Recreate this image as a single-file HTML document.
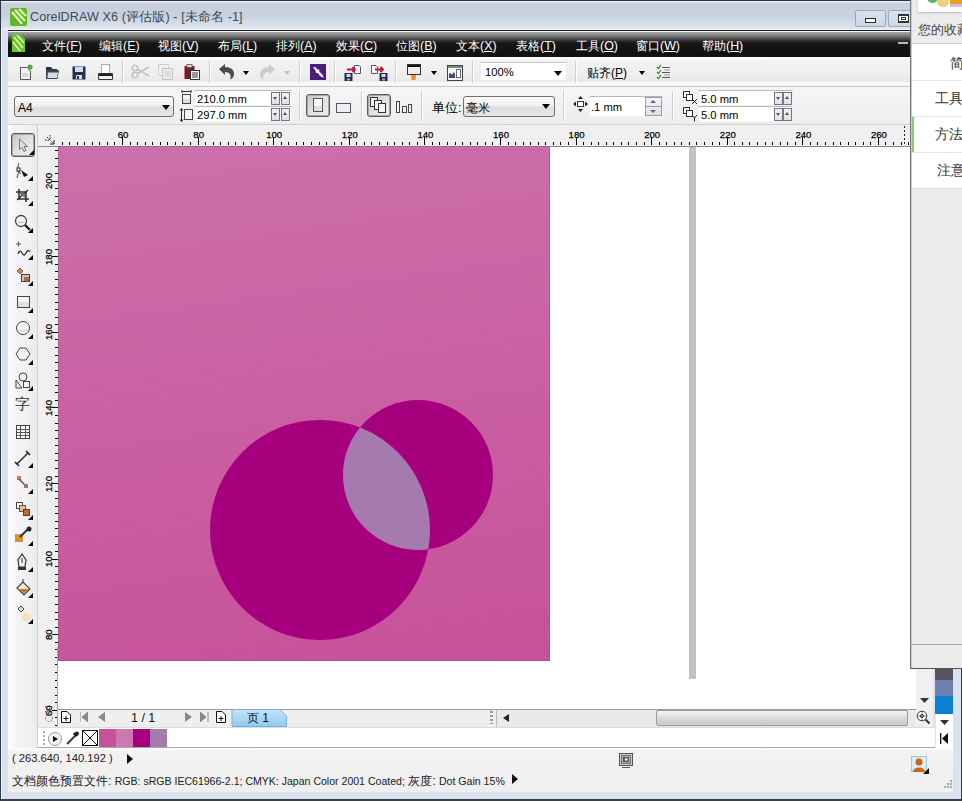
<!DOCTYPE html>
<html><head><meta charset="utf-8">
<style>
*{margin:0;padding:0;box-sizing:border-box}
html,body{width:962px;height:801px;overflow:hidden;background:#d9e3f0;font-family:"Liberation Sans",sans-serif;font-size:12px;color:#000}
.a{position:absolute}
#frame{left:0;top:0;width:962px;height:801px;background:#d9e3f0;border-left:1px solid #323a48;border-top:1px solid #2a3344;border-bottom:2px solid #3c4046;border-right:1px solid #323a48;box-shadow:inset 1px 0 0 #eef4fd}
#title{left:1px;top:1px;width:910px;height:29px;background:linear-gradient(#e8eef8 0,#e8eef8 1px,#c7d0dc 2px,#c8d2de 15px,#d3dde9 22px,#dde4ed 27px,#f4f6fa 29px)}
#tline{left:8px;top:30px;width:903px;height:1px;background:#1a1e28}
#tline2{left:8px;top:31px;width:903px;height:1px;background:#f4f4f4}
#ttext{left:30px;top:9px;font-size:12.6px;color:#3e4858;white-space:nowrap;letter-spacing:0.1px}
#menubar{left:8px;top:32px;width:903px;height:25px;background:linear-gradient(#a8a8a8 0,#7a7a7a 4px,#3a3a3a 8px,#161616 11px,#111 100%)}
.mi{position:absolute;top:6px;color:#fff;font-size:12.4px;white-space:nowrap}
#std{left:8px;top:57px;width:903px;height:30px;background:linear-gradient(#fdfdfd,#f2f2f2 15%,#eeeeee 60%,#e9e9e9 85%,#fafafa 88%,#f6f6f6);border-bottom:1px solid #c8c8c8}
#prop{left:8px;top:87px;width:903px;height:38px;background:linear-gradient(#f6f6f6,#ededed);border-bottom:1px solid #cfcfcf}
.sep{position:absolute;width:2px;border-left:1px solid #d0d0d0;border-right:1px solid #fff}
#tools{left:8px;top:125px;width:30px;height:623px;background:linear-gradient(90deg,#fefeff,#f5f3f7 8px,#f0f0f0 20px,#ececec);border-right:1px solid #cfcfcf}
#rulerT{left:38px;top:125px;width:872px;height:22px;background:#f0f0f0;border-bottom:1px solid #8a8a8a}
#rulerL{left:38px;top:147px;width:20px;height:580px;background:#f0f0f0}
#canvas{left:58px;top:147px;width:858px;height:563px;background:#fff;border-bottom:1px solid #9a9a9a}
#page{left:58px;top:146px;width:492px;height:515px;background:linear-gradient(172deg,#cb70aa,#c95da0 60%,#c7529a);box-shadow:inset 0 0 0 1px rgba(140,90,120,0.55)}
#shadowR{left:689px;top:147px;width:7px;height:532px;background:#c2c2c2}
#panel{left:910px;top:0;width:52px;height:669px;background:#ececec;border-left:2px solid #c8c8c8;border-bottom:1px solid #6e6e6e}
#nav{left:58px;top:710px;width:858px;height:17px;background:#efefef}
#pal{left:38px;top:727px;width:897px;height:21px;background:#fff;border-top:1px solid #dcdcdc;border-bottom:1px solid #a8a8a8}
#status{left:8px;top:748px;width:945px;height:44px;background:linear-gradient(#fbfbfb,#f2f2f2 4px,#efefef);box-shadow:inset 0 1px 0 #fff}
.rt{position:absolute;font-size:10px;color:#000;top:2px;white-space:nowrap;-webkit-text-stroke:0.25px #000}
.tick{position:absolute;background:#000}
.combo{position:absolute;border:1px solid #707070;border-radius:3px;background:linear-gradient(#fbfbfb,#f0f0f0 45%,#dedede 55%,#e6e6e6)}
.darr{position:absolute;width:0;height:0;border-left:4px solid transparent;border-right:4px solid transparent;border-top:5px solid #000}
.tbox{position:absolute;background:#fff;border:1px solid #f2f2f2;border-top-color:#b8b8b8;font-size:11.2px;padding-left:2px;line-height:14px;white-space:nowrap}
.spin{position:absolute;width:9px;height:13px;border:1px solid #75758a;background:linear-gradient(#f2f2f6,#e0e0e8)}
.btnp{position:absolute;border:1px solid #5c5c5c;border-radius:3px;background:linear-gradient(135deg,#c4c4c4,#e2e2e2 50%,#eeeeee);box-shadow:inset 0 0 0 1px #a8a8a8}
.ico{position:absolute}
</style></head><body>
<div id="frame" class="a"></div>
<div id="title" class="a"></div>
<svg class="a" style="left:10px;top:8px" width="17" height="18" viewBox="0 0 17 18">
 <rect x="0" y="0" width="17" height="18" rx="2" fill="#5fb81e"/>
 <path d="M2 4 L12 16 M5 2 L15 13 M9 1 L16 8" stroke="#e6f7c8" stroke-width="2.2" fill="none"/>
</svg>
<div id="ttext" class="a">CorelDRAW X6 (评估版) - [未命名 -1]</div>
<div class="a" style="left:855px;top:10px;width:31px;height:17px;border:1px solid #9aaabd;border-radius:2px;background:linear-gradient(#d8e2ee,#cdd9e7)"></div>
<div class="a" style="left:865px;top:18px;width:11px;height:5px;border:1px solid #2a2a2a;background:#fff"></div>
<div class="a" style="left:888px;top:10px;width:24px;height:17px;border:1px solid #9aaabd;border-radius:2px;background:linear-gradient(#d8e2ee,#cdd9e7)"></div>
<div class="a" style="left:898px;top:14px;width:11px;height:9px;border:1px solid #333;border-top-width:2px;border-bottom-width:2px;background:#fff"></div>
<div class="a" style="left:901px;top:17px;width:5px;height:3px;border:1px solid #333"></div>
<div id="tline" class="a"></div>
<div id="tline2" class="a"></div>
<div id="menubar" class="a">
 <svg class="a" style="left:4px;top:2px" width="13" height="18" viewBox="0 0 13 18"><path d="M0 0 L8 0 L13 5 L13 18 L0 18Z" fill="#6ec22a"/><path d="M2 3 L11 14 M1 8 L8 17 M5 1 L12 9" stroke="#d8f5b0" stroke-width="1.6"/></svg>
 <span class="mi" style="left:34px">文件(<u style="text-decoration-thickness:1px;text-underline-offset:1px">F</u>)</span>
 <span class="mi" style="left:91px">编辑(<u style="text-decoration-thickness:1px;text-underline-offset:1px">E</u>)</span>
 <span class="mi" style="left:150px">视图(<u style="text-decoration-thickness:1px;text-underline-offset:1px">V</u>)</span>
 <span class="mi" style="left:210px">布局(<u style="text-decoration-thickness:1px;text-underline-offset:1px">L</u>)</span>
 <span class="mi" style="left:268px">排列(<u style="text-decoration-thickness:1px;text-underline-offset:1px">A</u>)</span>
 <span class="mi" style="left:328px">效果(<u style="text-decoration-thickness:1px;text-underline-offset:1px">C</u>)</span>
 <span class="mi" style="left:388px">位图(<u style="text-decoration-thickness:1px;text-underline-offset:1px">B</u>)</span>
 <span class="mi" style="left:448px">文本(<u style="text-decoration-thickness:1px;text-underline-offset:1px">X</u>)</span>
 <span class="mi" style="left:508px">表格(<u style="text-decoration-thickness:1px;text-underline-offset:1px">T</u>)</span>
 <span class="mi" style="left:568px">工具(<u style="text-decoration-thickness:1px;text-underline-offset:1px">O</u>)</span>
 <span class="mi" style="left:628px">窗口(<u style="text-decoration-thickness:1px;text-underline-offset:1px">W</u>)</span>
 <span class="mi" style="left:694px">帮助(<u style="text-decoration-thickness:1px;text-underline-offset:1px">H</u>)</span>
 <div class="a" style="left:890px;top:10px;width:10px;height:2px;background:#bbb"></div>
</div>
<div id="std" class="a"></div>
<!--STD--><!-- new -->
<svg class="ico" style="left:19px;top:64px" width="15" height="16" viewBox="0 0 15 16"><path d="M1.5 3.5 H8 L11.5 7 V15.5 H1.5Z" fill="#f4f4f4" stroke="#555"/><path d="M3 12 H10 M3 10 H9" stroke="#bbb"/><circle cx="11" cy="3" r="2.6" fill="#4caf2a"/></svg>
<!-- open -->
<svg class="ico" style="left:45px;top:66px" width="15" height="14" viewBox="0 0 15 14"><path d="M1 1 H6 L7.5 3 H12 V5 H1Z" fill="#2a3140"/><path d="M1 4 H14 L12.5 13 H1Z" fill="#3c4658"/><path d="M3 6.5 H13 L12 12 H2.5Z" fill="#d6dbe6"/></svg>
<!-- save -->
<svg class="ico" style="left:72px;top:66px" width="14" height="14" viewBox="0 0 14 14"><rect x="0.5" y="0.5" width="13" height="13" fill="#28304f"/><rect x="3" y="1" width="8" height="5" fill="#d8dcea"/><rect x="4" y="9" width="6" height="4" fill="#d8dcea"/><rect x="5" y="10" width="2" height="3" fill="#28304f"/></svg>
<!-- print -->
<svg class="ico" style="left:98px;top:64px" width="15" height="16" viewBox="0 0 15 16"><rect x="3.5" y="0.5" width="8" height="9" fill="#fff" stroke="#aaa"/><path d="M0.5 9.5 H14.5 V15.5 H0.5Z" fill="#f0f0f0" stroke="#333"/><rect x="1" y="10" width="13" height="2" fill="#222"/></svg>
<div class="sep" style="left:122px;top:61px;height:22px"></div>
<!-- cut -->
<svg class="ico" style="left:131px;top:64px" width="19" height="15" viewBox="0 0 19 15"><circle cx="4" cy="4" r="2.8" fill="none" stroke="#c4c4c4" stroke-width="1.6"/><circle cx="4" cy="11" r="2.8" fill="none" stroke="#c4c4c4" stroke-width="1.6"/><path d="M6 5 L18 12 M6 10 L18 3" stroke="#c4c4c4" stroke-width="1.6"/></svg>
<!-- copy -->
<svg class="ico" style="left:158px;top:64px" width="16" height="16" viewBox="0 0 16 16"><rect x="0.5" y="0.5" width="10" height="11" fill="#f2f2f2" stroke="#cfcfcf"/><rect x="4.5" y="4.5" width="10" height="11" fill="#eaeaea" stroke="#c4c4c4"/><path d="M7 8 H12 M7 10 H12 M7 12 H12" stroke="#cfcfcf"/></svg>
<!-- paste -->
<svg class="ico" style="left:184px;top:64px" width="16" height="16" viewBox="0 0 16 16"><rect x="0.5" y="2" width="10" height="13" fill="#7a1a28"/><rect x="3" y="0.5" width="5" height="3" fill="#ddd" stroke="#555" stroke-width="0.8"/><rect x="6.5" y="6.5" width="9" height="9" fill="#fff" stroke="#333"/><path d="M8 9 H14 M8 11 H14 M8 13 H14" stroke="#333"/></svg>
<div class="sep" style="left:209px;top:61px;height:22px"></div>
<!-- undo -->
<svg class="ico" style="left:218px;top:63px" width="18" height="17" viewBox="0 0 18 17"><path d="M1 6 L7 1 V4 C13 4 16 7 16 11 C16 14 14 16 12 16.5 C13.5 14 13 9 7 9 V12Z" fill="#4a4a4a"/></svg>
<div class="darr" style="left:243px;top:71px;border-left-width:3px;border-right-width:3px;border-top-width:4px"></div>
<svg class="ico" style="left:258px;top:63px" width="18" height="17" viewBox="0 0 18 17"><path d="M17 6 L11 1 V4 C5 4 2 7 2 11 C2 14 4 16 6 16.5 C4.5 14 5 9 11 9 V12Z" fill="#cdcdcd"/></svg>
<div class="darr" style="left:284px;top:71px;border-left-width:3px;border-right-width:3px;border-top-width:4px;border-top-color:#c0c0c0"></div>
<div class="sep" style="left:299px;top:61px;height:22px"></div>
<!-- corel connect purple -->
<svg class="ico" style="left:310px;top:64px" width="16" height="16" viewBox="0 0 16 16"><rect width="16" height="16" fill="#4b1d78"/><path d="M3 3 L6 3.5 L7.5 6 L9 5 L9.5 8 L12 10 L14 14 L10 12 L8 9 L6 9 L5.5 6.5Z" fill="#fff"/></svg>
<div class="sep" style="left:334px;top:61px;height:22px"></div>
<!-- import -->
<svg class="ico" style="left:344px;top:64px" width="18" height="17" viewBox="0 0 18 17"><path d="M10.5 1.5 H15 L16.5 3 V9.5 H10.5Z" fill="#fff" stroke="#556"/><path d="M3 5.5 H11 M8.5 3 L11 5.5 L8.5 8" stroke="#c8102e" stroke-width="1.8" fill="none"/><rect x="0.5" y="9" width="8" height="8" fill="#1c2f4a"/><rect x="2.5" y="10" width="4" height="3" fill="#d8dde8"/><rect x="3" y="14.5" width="3" height="2" fill="#aab"/></svg>
<!-- export -->
<svg class="ico" style="left:370px;top:64px" width="18" height="17" viewBox="0 0 18 17"><path d="M1.5 1.5 H6 L7.5 3 V9.5 H1.5Z" fill="#fff" stroke="#556"/><path d="M5 5.5 H13 M10.5 3 L13 5.5 L10.5 8" stroke="#c8102e" stroke-width="1.8" fill="none"/><rect x="9.5" y="9" width="8" height="8" fill="#1c2f4a"/><rect x="11.5" y="10" width="4" height="3" fill="#d8dde8"/><rect x="12" y="14.5" width="3" height="2" fill="#aab"/></svg>
<div class="sep" style="left:395px;top:61px;height:22px"></div>
<!-- launcher -->
<svg class="ico" style="left:406px;top:64px" width="16" height="17" viewBox="0 0 16 17"><rect x="1.5" y="0.5" width="13" height="10" fill="#f0e8ec" stroke="#333"/><rect x="2" y="1" width="12" height="2" fill="#111"/><path d="M5 11 L10 11 L9.5 16 L5.5 16Z" fill="#f08a30"/></svg>
<div class="darr" style="left:431px;top:71px;border-left-width:3px;border-right-width:3px;border-top-width:4px"></div>
<!-- welcome -->
<svg class="ico" style="left:447px;top:65px" width="16" height="16" viewBox="0 0 16 16"><rect x="0.5" y="0.5" width="15" height="15" fill="#f4f4f4" stroke="#444"/><rect x="1" y="1" width="14" height="2" fill="#7a8a7a"/><path d="M2 13 V9 L4 8 L5 10 L7 7 L8 9 V13Z" fill="#3c4a7a"/><rect x="9.5" y="4.5" width="4" height="8" fill="#fff" stroke="#667"/></svg>
<div class="sep" style="left:472px;top:61px;height:22px"></div>
<!-- zoom combo -->
<div class="a" style="left:480px;top:62px;width:87px;height:19px;background:#fff;border:1px solid #ececec;border-top-color:#c8c8c8"></div>
<div class="a" style="left:485px;top:66px;font-size:11.2px">100%</div>
<div class="darr" style="left:554px;top:71px"></div>
<div class="sep" style="left:575px;top:61px;height:22px"></div>
<div class="a" style="left:587px;top:65px;font-size:12px">贴齐(<u style="text-decoration-thickness:1px;text-underline-offset:1px">P</u>)</div>
<div class="darr" style="left:639px;top:71px;border-left-width:3px;border-right-width:3px;border-top-width:4px"></div>
<svg class="ico" style="left:656px;top:64px" width="15" height="16" viewBox="0 0 15 16"><path d="M6 3.5 H14 M6 8.5 H14 M6 13.5 H14" stroke="#5a5a5a" stroke-width="1"/><path d="M8 6 H14 M8 11 H14" stroke="#9aa090" stroke-width="1"/><path d="M1 3 L2.5 4.5 L5 1 M1 8 L2.5 9.5 L5 6 M1 13 L2.5 14.5 L5 11" stroke="#4a7a40" stroke-width="1.2" fill="none"/></svg>
<!--/STD-->
<div id="prop" class="a"></div>
<!--PROP--><div class="combo" style="left:14px;top:96px;width:160px;height:21px"></div>
<div class="a" style="left:18px;top:101px;font-size:12px">A4</div>
<div class="darr" style="left:162px;top:105px"></div>
<!-- width/height icons -->
<svg class="ico" style="left:181px;top:90px" width="12" height="14" viewBox="0 0 12 14"><path d="M1 1.5 H10 M1 0 V3 M10 0 V3" stroke="#333"/><rect x="1.5" y="4.5" width="8" height="9" fill="#f4f4f4" stroke="#444"/><rect x="2" y="9" width="7" height="4" fill="#dcdce8"/></svg>
<svg class="ico" style="left:179px;top:108px" width="15" height="14" viewBox="0 0 15 14"><path d="M2.5 1 V13 M1 2.5 L2.5 0.5 L4 2.5 M1 11.5 L2.5 13.5 L4 11.5" stroke="#222" fill="none"/><rect x="5.5" y="1.5" width="8" height="10" fill="#f4f4f4" stroke="#444"/></svg>
<div class="tbox" style="left:194px;top:90px;width:98px;height:16px;padding-top:1px">210.0 mm</div>
<div class="tbox" style="left:194px;top:106px;width:98px;height:16px;padding-top:1px">297.0 mm</div>
<div class="spin" style="left:271px;top:92px"></div><div class="spin" style="left:281px;top:92px"></div>
<div class="spin" style="left:271px;top:108px"></div><div class="spin" style="left:281px;top:108px"></div>
<div class="darr" style="left:273px;top:97px;border-left-width:2.5px;border-right-width:2.5px;border-top-width:3px;border-top-color:#555"></div>
<div class="darr" style="left:283px;top:96px;border-left-width:2.5px;border-right-width:2.5px;border-top-width:0;border-bottom:3px solid #555"></div>
<div class="darr" style="left:273px;top:113px;border-left-width:2.5px;border-right-width:2.5px;border-top-width:3px;border-top-color:#555"></div>
<div class="darr" style="left:283px;top:112px;border-left-width:2.5px;border-right-width:2.5px;border-top-width:0;border-bottom:3px solid #555"></div>
<div class="sep" style="left:299px;top:91px;height:30px"></div>
<div class="btnp" style="left:306px;top:94px;width:24px;height:23px"></div>
<svg class="ico" style="left:312px;top:98px" width="12" height="15" viewBox="0 0 12 15"><rect x="1.5" y="0.5" width="9" height="13" fill="#fafafa" stroke="#555"/><rect x="2" y="8" width="8" height="5" fill="#dcdce8"/></svg>
<svg class="ico" style="left:336px;top:103px" width="16" height="11" viewBox="0 0 16 11"><rect x="0.5" y="0.5" width="14" height="9" fill="#eeeef6" stroke="#555"/></svg>
<div class="sep" style="left:361px;top:91px;height:30px"></div>
<div class="btnp" style="left:367px;top:94px;width:24px;height:23px"></div>
<svg class="ico" style="left:370px;top:97px" width="18" height="17" viewBox="0 0 18 17"><rect x="0.5" y="0.5" width="7" height="9" fill="#f4f4f4" stroke="#333"/><rect x="4.5" y="3.5" width="7" height="9" fill="#f4f4f4" stroke="#333"/><rect x="8.5" y="6.5" width="7" height="9" fill="#f4f4f4" stroke="#333"/></svg>
<svg class="ico" style="left:396px;top:101px" width="18" height="13" viewBox="0 0 18 13"><rect x="0.5" y="0.5" width="3" height="11" fill="#f4f4f4" stroke="#444"/><rect x="6.5" y="5.5" width="4" height="6" fill="#f4f4f4" stroke="#444"/><rect x="12.5" y="3.5" width="3" height="8" fill="#f4f4f4" stroke="#444"/></svg>
<div class="sep" style="left:421px;top:91px;height:30px"></div>
<div class="a" style="left:432px;top:100px;font-size:12.5px">单位:</div>
<div class="combo" style="left:463px;top:96px;width:92px;height:21px"></div>
<div class="a" style="left:466px;top:100px;font-size:12px">毫米</div>
<div class="darr" style="left:542px;top:104px"></div>
<div class="sep" style="left:563px;top:91px;height:30px"></div>
<svg class="ico" style="left:573px;top:96px" width="15" height="16" viewBox="0 0 15 16"><path d="M7.5 0 L10 3 H5Z M7.5 16 L10 13 H5Z M0 8 L3 5.5 V10.5Z M15 8 L12 5.5 V10.5Z" fill="#222"/><rect x="4.5" y="5.5" width="6" height="5" fill="#fff" stroke="#333"/></svg>
<div class="tbox" style="left:589px;top:96px;width:74px;height:21px;padding-top:3px;padding-left:1px">.1 mm</div>
<div class="a" style="left:645px;top:97px;width:17px;height:19px;border:1px solid #9a9aae;background:linear-gradient(#f4f4f8,#dedee6)"></div>
<div class="a" style="left:646px;top:106px;width:15px;height:1px;background:#9a9aae"></div>
<div class="darr" style="left:650px;top:100px;border-left-width:3px;border-right-width:3px;border-top-width:0;border-bottom:3px solid #667"></div>
<div class="darr" style="left:650px;top:110px;border-left-width:3px;border-right-width:3px;border-top-width:3px;border-top-color:#667"></div>
<div class="sep" style="left:672px;top:91px;height:30px"></div>
<svg class="ico" style="left:683px;top:91px" width="15" height="14" viewBox="0 0 15 14"><rect x="0.5" y="0.5" width="6" height="6" fill="#fff" stroke="#333"/><rect x="3.5" y="3.5" width="6" height="6" fill="#fff" stroke="#333"/><path d="M9 8 L14 13 M14 8 L9 13" stroke="#222"/></svg>
<svg class="ico" style="left:683px;top:107px" width="15" height="15" viewBox="0 0 15 15"><rect x="0.5" y="0.5" width="6" height="6" fill="#fff" stroke="#333"/><rect x="3.5" y="3.5" width="6" height="6" fill="#fff" stroke="#333"/><path d="M9 8 L11.5 11 L14 8 M11.5 11 V14.5" stroke="#222" fill="none"/></svg>
<div class="tbox" style="left:698px;top:90px;width:95px;height:16px;padding-top:1px">5.0 mm</div>
<div class="tbox" style="left:698px;top:106px;width:95px;height:16px;padding-top:1px">5.0 mm</div>
<div class="spin" style="left:774px;top:92px"></div><div class="spin" style="left:783px;top:92px"></div>
<div class="spin" style="left:774px;top:108px"></div><div class="spin" style="left:783px;top:108px"></div>
<div class="darr" style="left:776px;top:97px;border-left-width:2.5px;border-right-width:2.5px;border-top-width:3px;border-top-color:#555"></div>
<div class="darr" style="left:785px;top:96px;border-left-width:2.5px;border-right-width:2.5px;border-top-width:0;border-bottom:3px solid #555"></div>
<div class="darr" style="left:776px;top:113px;border-left-width:2.5px;border-right-width:2.5px;border-top-width:3px;border-top-color:#555"></div>
<div class="darr" style="left:785px;top:112px;border-left-width:2.5px;border-right-width:2.5px;border-top-width:0;border-bottom:3px solid #555"></div>
<!--/PROP-->
<div id="tools" class="a"></div>
<!--TOOLS--><div class="btnp" style="left:11px;top:133px;width:24px;height:24px"></div>
<svg class="ico" style="left:18px;top:138px" width="12" height="15" viewBox="0 0 12 15"><path d="M1.5 1 V11.5 L4 9.5 L6 13.5 L8 12.5 L6 8.5 H9.5Z" fill="#e4e4e4" stroke="#777" stroke-width="1"/></svg>
<svg class="ico" style="left:29px;top:150px" width="5" height="5"><path d="M5 0 V5 H0Z" fill="#000"/></svg>
<!-- shape -->
<svg class="ico" style="left:14px;top:162px" width="20" height="20" viewBox="0 0 20 20"><path d="M5 1 C3 5 4 9 7 12 M5 8 L3 16" stroke="#444" fill="none"/><rect x="3" y="6" width="3" height="3" fill="#fff" stroke="#222"/><path d="M7 8 L14 13 L10 15Z" fill="#111"/><path d="M19 14 V19 H14Z" fill="#000"/></svg>
<!-- crop -->
<svg class="ico" style="left:14px;top:187px" width="20" height="20" viewBox="0 0 20 20"><path d="M5 2 V12 H15 M2 5 H12 V15" stroke="#333" stroke-width="1.6" fill="none"/><path d="M3 13 L14 3" stroke="#222" stroke-width="1.2"/><path d="M5 6 H11 V11" fill="#6a6a80"/><path d="M19 14 V19 H14Z" fill="#000"/></svg>
<!-- zoom -->
<svg class="ico" style="left:14px;top:214px" width="20" height="20" viewBox="0 0 20 20"><circle cx="7" cy="7" r="5.5" fill="#f4f4f4" stroke="#444" stroke-width="1.3"/><path d="M4 8 Q7 10 10 8" stroke="#bbb" fill="none"/><path d="M11 11 L16 16" stroke="#222" stroke-width="2.4"/><path d="M19 14 V19 H14Z" fill="#000"/></svg>
<!-- freehand -->
<svg class="ico" style="left:14px;top:240px" width="20" height="20" viewBox="0 0 20 20"><path d="M2 4 H7 M4.5 1.5 V6.5" stroke="#555"/><path d="M4 14 Q6 9 8 13 T12 13 T16 12" stroke="#333" stroke-width="1.3" fill="none"/><path d="M19 15 V20 H14Z" fill="#000"/></svg>
<!-- smart fill -->
<svg class="ico" style="left:14px;top:266px" width="20" height="20" viewBox="0 0 20 20"><path d="M3 5 L6 2 L9 5 L6 8Z" fill="#c88850" stroke="#555" stroke-width="0.8"/><rect x="7.5" y="8.5" width="8" height="7" fill="#d8c0a8" stroke="#444"/><rect x="10" y="11" width="5" height="4" fill="#a07050"/><path d="M19 15 V20 H14Z" fill="#000"/></svg>
<!-- rect -->
<svg class="ico" style="left:14px;top:293px" width="20" height="20" viewBox="0 0 20 20"><rect x="3.5" y="3.5" width="12" height="11" fill="#f6f6f6" stroke="#444"/><rect x="4" y="9" width="11" height="5" fill="#dedee6"/><path d="M19 15 V20 H14Z" fill="#000"/></svg>
<!-- ellipse -->
<svg class="ico" style="left:14px;top:319px" width="20" height="20" viewBox="0 0 20 20"><circle cx="9" cy="9" r="6.5" fill="#f6f6f6" stroke="#444"/><path d="M4 11 Q9 14 14 11" stroke="#ccc" fill="none"/><path d="M19 15 V20 H14Z" fill="#000"/></svg>
<!-- polygon -->
<svg class="ico" style="left:14px;top:345px" width="20" height="20" viewBox="0 0 20 20"><path d="M6 3 H12 L16 9 L12 15 H6 L2 9Z" fill="#f2f2f6" stroke="#444"/><path d="M19 15 V20 H14Z" fill="#000"/></svg>
<!-- basic shapes -->
<svg class="ico" style="left:14px;top:371px" width="20" height="20" viewBox="0 0 20 20"><path d="M2 9 L8 17 H2Z" fill="#eee" stroke="#444"/><circle cx="9" cy="6" r="4" fill="#f4f4f4" stroke="#444"/><rect x="9.5" y="10.5" width="6" height="6" fill="#f4f4f4" stroke="#444"/><path d="M19 15 V20 H14Z" fill="#000"/></svg>
<div class="a" style="left:15px;top:395px;font-size:15px;color:#333">字</div>
<!-- table -->
<svg class="ico" style="left:14px;top:424px" width="20" height="18" viewBox="0 0 20 18"><rect x="2.5" y="1.5" width="13" height="13" fill="#fafafa" stroke="#444"/><path d="M2.5 5.5 H15.5 M2.5 8.5 H15.5 M2.5 11.5 H15.5 M6.5 1.5 V14.5 M11.5 1.5 V14.5" stroke="#555"/></svg>
<!-- dimension -->
<svg class="ico" style="left:14px;top:449px" width="20" height="20" viewBox="0 0 20 20"><path d="M3 15 L14 4" stroke="#333" stroke-width="1.6"/><path d="M1 13 L5 17 M12 2 L16 6" stroke="#222" stroke-width="1.6"/><path d="M19 14 V19 H14Z" fill="#000"/></svg>
<!-- connector -->
<svg class="ico" style="left:14px;top:474px" width="20" height="20" viewBox="0 0 20 20"><rect x="3" y="2" width="4" height="4" fill="#c08858"/><path d="M5 5 L12 12" stroke="#444" stroke-width="1.3"/><rect x="10" y="10" width="4" height="4" fill="#a07a60"/><path d="M19 15 V20 H14Z" fill="#000"/></svg>
<!-- blend -->
<svg class="ico" style="left:14px;top:500px" width="20" height="20" viewBox="0 0 20 20"><rect x="2.5" y="2.5" width="6" height="6" fill="#fff" stroke="#444"/><rect x="5.5" y="5.5" width="6" height="6" fill="#e8c090" stroke="#555"/><rect x="9.5" y="9.5" width="6" height="6" fill="#d06818" stroke="#444"/><path d="M19 15 V20 H14Z" fill="#000"/></svg>
<!-- eyedropper -->
<svg class="ico" style="left:14px;top:526px" width="20" height="20" viewBox="0 0 20 20"><rect x="1" y="8" width="8" height="8" fill="#d89030"/><path d="M6 11 L13 4" stroke="#333" stroke-width="2"/><circle cx="15" cy="3" r="2.5" fill="#223"/><path d="M19 15 V20 H14Z" fill="#000"/></svg>
<!-- outline pen -->
<svg class="ico" style="left:14px;top:552px" width="20" height="20" viewBox="0 0 20 20"><path d="M8 2 L12 8 L11 15 H5 L4 8Z" fill="#f0f0f0" stroke="#333" stroke-width="1.2"/><path d="M8 6 V11" stroke="#333"/><rect x="4" y="15" width="8" height="3" fill="#333"/><path d="M19 15 V20 H14Z" fill="#000"/></svg>
<!-- fill -->
<svg class="ico" style="left:14px;top:578px" width="20" height="20" viewBox="0 0 20 20"><path d="M3 10 L9 4 L16 11 L10 17Z" fill="#f2e8dc" stroke="#444" stroke-width="1.2"/><path d="M4 11 L15 11 L10 16Z" fill="#c87828"/><path d="M9 1 V5" stroke="#333"/><path d="M19 15 V20 H14Z" fill="#000"/></svg>
<!-- interactive fill -->
<svg class="ico" style="left:14px;top:604px" width="20" height="20" viewBox="0 0 20 20"><path d="M4 5 L7 2 L10 5 L7 8Z" fill="#ddd" stroke="#444"/><circle cx="12" cy="13" r="4.5" fill="#f6e0c0"/><path d="M19 15 V20 H14Z" fill="#000"/></svg>
<!--/TOOLS-->
<div id="rulerT" class="a"></div>
<div id="rulerL" class="a"></div>
<div id="canvas" class="a"></div>
<div id="page" class="a"></div>
<div id="shadowR" class="a"></div>
<svg class="a" style="left:0;top:0" width="962" height="801">
 <circle cx="320" cy="530" r="110" fill="#a6007f"/>
 <circle cx="418" cy="475" r="75" fill="#a6007f"/>
 <clipPath id="cl"><circle cx="320" cy="530" r="110"/></clipPath>
 <circle cx="418" cy="475" r="75" fill="#a67aae" clip-path="url(#cl)"/>
</svg>
<svg class="ico" style="left:44px;top:134px" width="12" height="12" viewBox="0 0 12 12"><path d="M1 6 H5 M6 1 V5 M3 3 L10 10" stroke="#222" stroke-dasharray="1.5 1"/><path d="M10 6 V10 H6" stroke="#222" fill="none"/></svg>
<div class="a" style="left:904px;top:126px;width:1px;height:20px;background:repeating-linear-gradient(#222 0 2px,transparent 2px 4px)"></div>
<!--RULERS--><div class="a" style="left:38px;top:125px;width:872px;height:22px;overflow:hidden">
<div class="tick" style="left:24px;top:17px;width:1px;height:3px"></div>
<div class="tick" style="left:31px;top:17px;width:1px;height:3px"></div>
<div class="tick" style="left:39px;top:17px;width:1px;height:3px"></div>
<div class="tick" style="left:46px;top:17px;width:1px;height:3px"></div>
<div class="tick" style="left:54px;top:17px;width:1px;height:3px"></div>
<div class="tick" style="left:61px;top:17px;width:1px;height:3px"></div>
<div class="tick" style="left:69px;top:17px;width:1px;height:3px"></div>
<div class="tick" style="left:76px;top:17px;width:1px;height:3px"></div>
<div class="tick" style="left:84px;top:12px;width:1px;height:8px"></div>
<div class="rt" style="font-size:9.6px;left:79.7px;top:3.5px">60</div>
<div class="tick" style="left:92px;top:17px;width:1px;height:3px"></div>
<div class="tick" style="left:99px;top:17px;width:1px;height:3px"></div>
<div class="tick" style="left:107px;top:17px;width:1px;height:3px"></div>
<div class="tick" style="left:114px;top:17px;width:1px;height:3px"></div>
<div class="tick" style="left:122px;top:17px;width:1px;height:3px"></div>
<div class="tick" style="left:129px;top:17px;width:1px;height:3px"></div>
<div class="tick" style="left:137px;top:17px;width:1px;height:3px"></div>
<div class="tick" style="left:144px;top:17px;width:1px;height:3px"></div>
<div class="tick" style="left:152px;top:17px;width:1px;height:3px"></div>
<div class="tick" style="left:160px;top:12px;width:1px;height:8px"></div>
<div class="rt" style="font-size:9.6px;left:155.3px;top:3.5px">80</div>
<div class="tick" style="left:167px;top:17px;width:1px;height:3px"></div>
<div class="tick" style="left:175px;top:17px;width:1px;height:3px"></div>
<div class="tick" style="left:182px;top:17px;width:1px;height:3px"></div>
<div class="tick" style="left:190px;top:17px;width:1px;height:3px"></div>
<div class="tick" style="left:197px;top:17px;width:1px;height:3px"></div>
<div class="tick" style="left:205px;top:17px;width:1px;height:3px"></div>
<div class="tick" style="left:213px;top:17px;width:1px;height:3px"></div>
<div class="tick" style="left:220px;top:17px;width:1px;height:3px"></div>
<div class="tick" style="left:228px;top:17px;width:1px;height:3px"></div>
<div class="tick" style="left:235px;top:12px;width:1px;height:8px"></div>
<div class="rt" style="font-size:9.6px;left:228.2px;top:3.5px">100</div>
<div class="tick" style="left:243px;top:17px;width:1px;height:3px"></div>
<div class="tick" style="left:250px;top:17px;width:1px;height:3px"></div>
<div class="tick" style="left:258px;top:17px;width:1px;height:3px"></div>
<div class="tick" style="left:265px;top:17px;width:1px;height:3px"></div>
<div class="tick" style="left:273px;top:17px;width:1px;height:3px"></div>
<div class="tick" style="left:281px;top:17px;width:1px;height:3px"></div>
<div class="tick" style="left:288px;top:17px;width:1px;height:3px"></div>
<div class="tick" style="left:296px;top:17px;width:1px;height:3px"></div>
<div class="tick" style="left:303px;top:17px;width:1px;height:3px"></div>
<div class="tick" style="left:311px;top:12px;width:1px;height:8px"></div>
<div class="rt" style="font-size:9.6px;left:303.8px;top:3.5px">120</div>
<div class="tick" style="left:318px;top:17px;width:1px;height:3px"></div>
<div class="tick" style="left:326px;top:17px;width:1px;height:3px"></div>
<div class="tick" style="left:333px;top:17px;width:1px;height:3px"></div>
<div class="tick" style="left:341px;top:17px;width:1px;height:3px"></div>
<div class="tick" style="left:349px;top:17px;width:1px;height:3px"></div>
<div class="tick" style="left:356px;top:17px;width:1px;height:3px"></div>
<div class="tick" style="left:364px;top:17px;width:1px;height:3px"></div>
<div class="tick" style="left:371px;top:17px;width:1px;height:3px"></div>
<div class="tick" style="left:379px;top:17px;width:1px;height:3px"></div>
<div class="tick" style="left:386px;top:12px;width:1px;height:8px"></div>
<div class="rt" style="font-size:9.6px;left:379.4px;top:3.5px">140</div>
<div class="tick" style="left:394px;top:17px;width:1px;height:3px"></div>
<div class="tick" style="left:401px;top:17px;width:1px;height:3px"></div>
<div class="tick" style="left:409px;top:17px;width:1px;height:3px"></div>
<div class="tick" style="left:417px;top:17px;width:1px;height:3px"></div>
<div class="tick" style="left:424px;top:17px;width:1px;height:3px"></div>
<div class="tick" style="left:432px;top:17px;width:1px;height:3px"></div>
<div class="tick" style="left:439px;top:17px;width:1px;height:3px"></div>
<div class="tick" style="left:447px;top:17px;width:1px;height:3px"></div>
<div class="tick" style="left:454px;top:17px;width:1px;height:3px"></div>
<div class="tick" style="left:462px;top:12px;width:1px;height:8px"></div>
<div class="rt" style="font-size:9.6px;left:455.0px;top:3.5px">160</div>
<div class="tick" style="left:470px;top:17px;width:1px;height:3px"></div>
<div class="tick" style="left:477px;top:17px;width:1px;height:3px"></div>
<div class="tick" style="left:485px;top:17px;width:1px;height:3px"></div>
<div class="tick" style="left:492px;top:17px;width:1px;height:3px"></div>
<div class="tick" style="left:500px;top:17px;width:1px;height:3px"></div>
<div class="tick" style="left:507px;top:17px;width:1px;height:3px"></div>
<div class="tick" style="left:515px;top:17px;width:1px;height:3px"></div>
<div class="tick" style="left:522px;top:17px;width:1px;height:3px"></div>
<div class="tick" style="left:530px;top:17px;width:1px;height:3px"></div>
<div class="tick" style="left:538px;top:12px;width:1px;height:8px"></div>
<div class="rt" style="font-size:9.6px;left:530.6px;top:3.5px">180</div>
<div class="tick" style="left:545px;top:17px;width:1px;height:3px"></div>
<div class="tick" style="left:553px;top:17px;width:1px;height:3px"></div>
<div class="tick" style="left:560px;top:17px;width:1px;height:3px"></div>
<div class="tick" style="left:568px;top:17px;width:1px;height:3px"></div>
<div class="tick" style="left:575px;top:17px;width:1px;height:3px"></div>
<div class="tick" style="left:583px;top:17px;width:1px;height:3px"></div>
<div class="tick" style="left:590px;top:17px;width:1px;height:3px"></div>
<div class="tick" style="left:598px;top:17px;width:1px;height:3px"></div>
<div class="tick" style="left:606px;top:17px;width:1px;height:3px"></div>
<div class="tick" style="left:613px;top:12px;width:1px;height:8px"></div>
<div class="rt" style="font-size:9.6px;left:606.2px;top:3.5px">200</div>
<div class="tick" style="left:621px;top:17px;width:1px;height:3px"></div>
<div class="tick" style="left:628px;top:17px;width:1px;height:3px"></div>
<div class="tick" style="left:636px;top:17px;width:1px;height:3px"></div>
<div class="tick" style="left:643px;top:17px;width:1px;height:3px"></div>
<div class="tick" style="left:651px;top:17px;width:1px;height:3px"></div>
<div class="tick" style="left:658px;top:17px;width:1px;height:3px"></div>
<div class="tick" style="left:666px;top:17px;width:1px;height:3px"></div>
<div class="tick" style="left:674px;top:17px;width:1px;height:3px"></div>
<div class="tick" style="left:681px;top:17px;width:1px;height:3px"></div>
<div class="tick" style="left:689px;top:12px;width:1px;height:8px"></div>
<div class="rt" style="font-size:9.6px;left:681.8px;top:3.5px">220</div>
<div class="tick" style="left:696px;top:17px;width:1px;height:3px"></div>
<div class="tick" style="left:704px;top:17px;width:1px;height:3px"></div>
<div class="tick" style="left:711px;top:17px;width:1px;height:3px"></div>
<div class="tick" style="left:719px;top:17px;width:1px;height:3px"></div>
<div class="tick" style="left:727px;top:17px;width:1px;height:3px"></div>
<div class="tick" style="left:734px;top:17px;width:1px;height:3px"></div>
<div class="tick" style="left:742px;top:17px;width:1px;height:3px"></div>
<div class="tick" style="left:749px;top:17px;width:1px;height:3px"></div>
<div class="tick" style="left:757px;top:17px;width:1px;height:3px"></div>
<div class="tick" style="left:764px;top:12px;width:1px;height:8px"></div>
<div class="rt" style="font-size:9.6px;left:757.4px;top:3.5px">240</div>
<div class="tick" style="left:772px;top:17px;width:1px;height:3px"></div>
<div class="tick" style="left:779px;top:17px;width:1px;height:3px"></div>
<div class="tick" style="left:787px;top:17px;width:1px;height:3px"></div>
<div class="tick" style="left:795px;top:17px;width:1px;height:3px"></div>
<div class="tick" style="left:802px;top:17px;width:1px;height:3px"></div>
<div class="tick" style="left:810px;top:17px;width:1px;height:3px"></div>
<div class="tick" style="left:817px;top:17px;width:1px;height:3px"></div>
<div class="tick" style="left:825px;top:17px;width:1px;height:3px"></div>
<div class="tick" style="left:832px;top:17px;width:1px;height:3px"></div>
<div class="tick" style="left:840px;top:12px;width:1px;height:8px"></div>
<div class="rt" style="font-size:9.6px;left:832.9px;top:3.5px">260</div>
<div class="tick" style="left:847px;top:17px;width:1px;height:3px"></div>
<div class="tick" style="left:855px;top:17px;width:1px;height:3px"></div>
<div class="tick" style="left:863px;top:17px;width:1px;height:3px"></div>
<div class="tick" style="left:870px;top:17px;width:1px;height:3px"></div>
</div>
<div class="a" style="left:38px;top:147px;width:20px;height:580px;overflow:hidden">
<div class="tick" style="left:17px;top:3px;width:3px;height:1px"></div>
<div class="tick" style="left:17px;top:11px;width:3px;height:1px"></div>
<div class="tick" style="left:17px;top:19px;width:3px;height:1px"></div>
<div class="tick" style="left:17px;top:26px;width:3px;height:1px"></div>
<div class="tick" style="left:14px;top:34px;width:6px;height:1px"></div>
<div class="rt" style="font-size:9.6px;left:5px;top:42.1px;transform:rotate(-90deg);transform-origin:0 0;line-height:12px">200</div>
<div class="tick" style="left:17px;top:41px;width:3px;height:1px"></div>
<div class="tick" style="left:17px;top:49px;width:3px;height:1px"></div>
<div class="tick" style="left:17px;top:56px;width:3px;height:1px"></div>
<div class="tick" style="left:17px;top:64px;width:3px;height:1px"></div>
<div class="tick" style="left:17px;top:71px;width:3px;height:1px"></div>
<div class="tick" style="left:17px;top:79px;width:3px;height:1px"></div>
<div class="tick" style="left:17px;top:87px;width:3px;height:1px"></div>
<div class="tick" style="left:17px;top:94px;width:3px;height:1px"></div>
<div class="tick" style="left:17px;top:102px;width:3px;height:1px"></div>
<div class="tick" style="left:14px;top:109px;width:6px;height:1px"></div>
<div class="rt" style="font-size:9.6px;left:5px;top:117.7px;transform:rotate(-90deg);transform-origin:0 0;line-height:12px">180</div>
<div class="tick" style="left:17px;top:117px;width:3px;height:1px"></div>
<div class="tick" style="left:17px;top:124px;width:3px;height:1px"></div>
<div class="tick" style="left:17px;top:132px;width:3px;height:1px"></div>
<div class="tick" style="left:17px;top:140px;width:3px;height:1px"></div>
<div class="tick" style="left:17px;top:147px;width:3px;height:1px"></div>
<div class="tick" style="left:17px;top:155px;width:3px;height:1px"></div>
<div class="tick" style="left:17px;top:162px;width:3px;height:1px"></div>
<div class="tick" style="left:17px;top:170px;width:3px;height:1px"></div>
<div class="tick" style="left:17px;top:177px;width:3px;height:1px"></div>
<div class="tick" style="left:14px;top:185px;width:6px;height:1px"></div>
<div class="rt" style="font-size:9.6px;left:5px;top:193.3px;transform:rotate(-90deg);transform-origin:0 0;line-height:12px">160</div>
<div class="tick" style="left:17px;top:192px;width:3px;height:1px"></div>
<div class="tick" style="left:17px;top:200px;width:3px;height:1px"></div>
<div class="tick" style="left:17px;top:208px;width:3px;height:1px"></div>
<div class="tick" style="left:17px;top:215px;width:3px;height:1px"></div>
<div class="tick" style="left:17px;top:223px;width:3px;height:1px"></div>
<div class="tick" style="left:17px;top:230px;width:3px;height:1px"></div>
<div class="tick" style="left:17px;top:238px;width:3px;height:1px"></div>
<div class="tick" style="left:17px;top:245px;width:3px;height:1px"></div>
<div class="tick" style="left:17px;top:253px;width:3px;height:1px"></div>
<div class="tick" style="left:14px;top:260px;width:6px;height:1px"></div>
<div class="rt" style="font-size:9.6px;left:5px;top:268.9px;transform:rotate(-90deg);transform-origin:0 0;line-height:12px">140</div>
<div class="tick" style="left:17px;top:268px;width:3px;height:1px"></div>
<div class="tick" style="left:17px;top:276px;width:3px;height:1px"></div>
<div class="tick" style="left:17px;top:283px;width:3px;height:1px"></div>
<div class="tick" style="left:17px;top:291px;width:3px;height:1px"></div>
<div class="tick" style="left:17px;top:298px;width:3px;height:1px"></div>
<div class="tick" style="left:17px;top:306px;width:3px;height:1px"></div>
<div class="tick" style="left:17px;top:313px;width:3px;height:1px"></div>
<div class="tick" style="left:17px;top:321px;width:3px;height:1px"></div>
<div class="tick" style="left:17px;top:329px;width:3px;height:1px"></div>
<div class="tick" style="left:14px;top:336px;width:6px;height:1px"></div>
<div class="rt" style="font-size:9.6px;left:5px;top:344.5px;transform:rotate(-90deg);transform-origin:0 0;line-height:12px">120</div>
<div class="tick" style="left:17px;top:344px;width:3px;height:1px"></div>
<div class="tick" style="left:17px;top:351px;width:3px;height:1px"></div>
<div class="tick" style="left:17px;top:359px;width:3px;height:1px"></div>
<div class="tick" style="left:17px;top:366px;width:3px;height:1px"></div>
<div class="tick" style="left:17px;top:374px;width:3px;height:1px"></div>
<div class="tick" style="left:17px;top:381px;width:3px;height:1px"></div>
<div class="tick" style="left:17px;top:389px;width:3px;height:1px"></div>
<div class="tick" style="left:17px;top:397px;width:3px;height:1px"></div>
<div class="tick" style="left:17px;top:404px;width:3px;height:1px"></div>
<div class="tick" style="left:14px;top:412px;width:6px;height:1px"></div>
<div class="rt" style="font-size:9.6px;left:5px;top:420.1px;transform:rotate(-90deg);transform-origin:0 0;line-height:12px">100</div>
<div class="tick" style="left:17px;top:419px;width:3px;height:1px"></div>
<div class="tick" style="left:17px;top:427px;width:3px;height:1px"></div>
<div class="tick" style="left:17px;top:434px;width:3px;height:1px"></div>
<div class="tick" style="left:17px;top:442px;width:3px;height:1px"></div>
<div class="tick" style="left:17px;top:449px;width:3px;height:1px"></div>
<div class="tick" style="left:17px;top:457px;width:3px;height:1px"></div>
<div class="tick" style="left:17px;top:465px;width:3px;height:1px"></div>
<div class="tick" style="left:17px;top:472px;width:3px;height:1px"></div>
<div class="tick" style="left:17px;top:480px;width:3px;height:1px"></div>
<div class="tick" style="left:14px;top:487px;width:6px;height:1px"></div>
<div class="rt" style="font-size:9.6px;left:5px;top:493.0px;transform:rotate(-90deg);transform-origin:0 0;line-height:12px">80</div>
<div class="tick" style="left:17px;top:495px;width:3px;height:1px"></div>
<div class="tick" style="left:17px;top:502px;width:3px;height:1px"></div>
<div class="tick" style="left:17px;top:510px;width:3px;height:1px"></div>
<div class="tick" style="left:17px;top:517px;width:3px;height:1px"></div>
<div class="tick" style="left:17px;top:525px;width:3px;height:1px"></div>
<div class="tick" style="left:17px;top:533px;width:3px;height:1px"></div>
<div class="tick" style="left:17px;top:540px;width:3px;height:1px"></div>
<div class="tick" style="left:17px;top:548px;width:3px;height:1px"></div>
<div class="tick" style="left:17px;top:555px;width:3px;height:1px"></div>
<div class="tick" style="left:14px;top:563px;width:6px;height:1px"></div>
<div class="rt" style="font-size:9.6px;left:5px;top:568.6px;transform:rotate(-90deg);transform-origin:0 0;line-height:12px">60</div>
<div class="tick" style="left:17px;top:570px;width:3px;height:1px"></div>
<div class="tick" style="left:17px;top:578px;width:3px;height:1px"></div>
</div><!--/RULERS-->
<div id="nav" class="a"></div>
<!--NAV-->
<svg class="ico" style="left:43px;top:704px" width="12" height="20" viewBox="0 0 12 20"><path d="M2 2 L9 8 M9 2 L2 8" stroke="#444" stroke-dasharray="1.5 1"/><circle cx="6" cy="14" r="3.5" fill="none" stroke="#777" stroke-dasharray="1.5 1"/></svg>
<div class="a" style="left:57px;top:647px;width:1px;height:80px;background:#aaa"></div>
<svg class="ico" style="left:61px;top:711px" width="11" height="12" viewBox="0 0 11 12"><path d="M0.5 0.5 H6 L9.5 4 V11.5 H0.5Z" fill="#fff" stroke="#111"/><path d="M5 5 V10 M2.5 7.5 H7.5" stroke="#111"/></svg>
<svg class="ico" style="left:80px;top:712px" width="8" height="10"><path d="M0 0 V10 M8 0 V10 L2 5Z" stroke="#888" fill="#888"/></svg>
<svg class="ico" style="left:98px;top:712px" width="7" height="10"><path d="M7 0 V10 L0 5Z" fill="#888"/></svg>
<div class="a" style="left:131px;top:711px;font-size:12.5px;color:#111">1 / 1</div>
<svg class="ico" style="left:185px;top:712px" width="7" height="10"><path d="M0 0 V10 L7 5Z" fill="#888"/></svg>
<svg class="ico" style="left:200px;top:712px" width="9" height="10"><path d="M0 0 V10 L6 5Z M8 0 V10" stroke="#888" fill="#888"/></svg>
<svg class="ico" style="left:216px;top:711px" width="11" height="12" viewBox="0 0 11 12"><path d="M0.5 0.5 H6 L9.5 4 V11.5 H0.5Z" fill="#fff" stroke="#111"/><path d="M5 5 V10 M2.5 7.5 H7.5" stroke="#111"/></svg>
<svg class="ico" style="left:231px;top:709px" width="57" height="18" viewBox="0 0 57 18"><defs><linearGradient id="tg" x1="0" y1="0" x2="0" y2="1"><stop offset="0" stop-color="#c6e4f8"/><stop offset="1" stop-color="#8ecaf0"/></linearGradient></defs><path d="M1 0.5 H49 L55.5 7 V17.5 H1Z" fill="url(#tg)" stroke="#7ab0d8"/></svg>
<div class="a" style="left:247px;top:710px;font-size:12px;color:#111">页 1</div>
<div class="a" style="left:490px;top:711px;width:3px;height:13px;background:repeating-linear-gradient(#999 0 2px,transparent 2px 4px)"></div>
<div class="a" style="left:496px;top:710px;width:1px;height:17px;background:#bdbdbd"></div>
<div class="a" style="left:497px;top:710px;width:418px;height:17px;background:#e9e9e9"></div>
<svg class="ico" style="left:503px;top:714px" width="6" height="8"><path d="M6 0 V8 L0 4Z" fill="#222"/></svg>
<div class="a" style="left:656px;top:710px;width:252px;height:16px;border:1px solid #9a9a9a;border-radius:2px;background:linear-gradient(#f4f4f4,#dcdcdc 50%,#c8c8c8)"></div>
<div class="a" style="left:916px;top:669px;width:17px;height:58px;background:#f0f0f0"></div>
<svg class="ico" style="left:920px;top:698px" width="9" height="5"><path d="M0 0 H9 L4.5 5Z" fill="#333"/></svg>
<svg class="ico" style="left:916px;top:710px" width="15" height="15" viewBox="0 0 15 15"><circle cx="6" cy="6" r="4.8" fill="#fff" stroke="#333"/><circle cx="6" cy="6" r="1.6" fill="none" stroke="#333"/><path d="M6 2 V10 M2 6 H10" stroke="#333" stroke-width="0.6"/><path d="M9.5 9.5 L13.5 13.5" stroke="#333" stroke-width="2"/></svg>
<!--/NAV-->
<div id="pal" class="a"></div>
<!--PAL--><div class="a" style="left:43px;top:731px;width:2px;height:14px;background:repeating-linear-gradient(#aaa 0 2px,transparent 2px 4px)"></div>
<svg class="ico" style="left:47px;top:731px" width="16" height="16" viewBox="0 0 16 16"><circle cx="8" cy="8" r="6.5" fill="#f4f4f4" stroke="#999"/><path d="M6 5 L11 8 L6 11Z" fill="#111"/></svg>
<svg class="ico" style="left:65px;top:730px" width="15" height="16" viewBox="0 0 15 16"><path d="M2 14 L10 6" stroke="#333" stroke-width="1.8"/><path d="M9 3 L12 6" stroke="#111" stroke-width="3"/><circle cx="12" cy="3.5" r="2" fill="#222"/></svg>
<div class="a" style="left:82px;top:730px;width:16px;height:16px;border:1px solid #111;background:#fff"></div>
<svg class="ico" style="left:82px;top:730px" width="16" height="16"><path d="M1 1 L15 15 M15 1 L1 15" stroke="#111"/></svg>
<div class="a" style="left:99px;top:729px;width:17px;height:18px;background:#c8529a"></div>
<div class="a" style="left:116px;top:729px;width:17px;height:18px;background:#cf77b1"></div>
<div class="a" style="left:133px;top:729px;width:17px;height:18px;background:#a6007f"></div>
<div class="a" style="left:150px;top:729px;width:17px;height:18px;background:#a67aae"></div>
<div class="a" style="left:935px;top:669px;width:18px;height:79px;background:#fff;border-left:1px solid #e4e4e4"></div>
<div class="a" style="left:935px;top:669px;width:18px;height:11px;background:#57545f"></div>
<div class="a" style="left:935px;top:680px;width:18px;height:16px;background:#6b80b0"></div>
<div class="a" style="left:935px;top:696px;width:18px;height:18px;background:#0b80d2"></div>
<svg class="ico" style="left:940px;top:720px" width="9" height="5"><path d="M0 0 H9 L4.5 5Z" fill="#333"/></svg>
<svg class="ico" style="left:940px;top:733px" width="8" height="11"><path d="M0.5 0 V11" stroke="#111" stroke-width="1.6"/><path d="M8 0 V11 L2 5.5Z" fill="#111"/></svg>
<!--/PAL-->
<div id="status" class="a"></div>
<!--STATUS--><div id="st1" class="a" style="left:12px;top:752px;font-size:11.2px;color:#222;white-space:nowrap">( 263.640, 140.192 )</div>
<svg class="ico" style="left:127px;top:754px" width="6" height="10"><path d="M0 0 V10 L6 5Z" fill="#111"/></svg>
<svg class="ico" style="left:619px;top:753px" width="15" height="15" viewBox="0 0 15 15"><rect x="0.5" y="0.5" width="13" height="12" fill="#c8c8cc" stroke="#555"/><rect x="2.5" y="2.5" width="9" height="8" fill="#aaaab0" stroke="#777"/><rect x="4.5" y="4.5" width="5" height="4" fill="#666" stroke="#555"/><rect x="6" y="5.5" width="2.5" height="2" fill="#fff"/><path d="M3 14.5 H11" stroke="#557"/></svg>
<div id="st2" class="a" style="left:12px;top:773px;font-size:12px;color:#222;white-space:nowrap">文档颜色预置文件: <span id="s2a" style="font-size:10.55px">RGB: sRGB IEC61966-2.1; CMYK: Japan Color 2001 Coated;</span> 灰度: <span id="s2b" style="font-size:10.6px">Dot Gain 15%</span></div>
<svg class="ico" style="left:512px;top:774px" width="6" height="10"><path d="M0 0 V10 L6 5Z" fill="#111"/></svg>
<svg class="ico" style="left:911px;top:756px" width="18" height="18" viewBox="0 0 18 18"><rect x="0.5" y="0.5" width="15" height="15" fill="#dfeaf6" stroke="#9cc"/><circle cx="8" cy="6" r="3.5" fill="#c8661a"/><path d="M2 16 C2 10 14 10 14 16Z" fill="#c8661a"/><path d="M18 12 V18 H12Z" fill="#111"/></svg>
<svg class="ico" style="left:943px;top:779px" width="10" height="11"><g fill="#aaa"><rect x="7" y="1" width="2" height="2"/><rect x="4" y="4" width="2" height="2"/><rect x="7" y="4" width="2" height="2"/><rect x="1" y="7" width="2" height="2"/><rect x="4" y="7" width="2" height="2"/><rect x="7" y="7" width="2" height="2"/></g></svg>
<!--/STATUS-->
<div id="panel" class="a"></div>
<!--PANEL--><div class="a" style="left:910px;top:0;width:1px;height:669px;background:#7a7a7a"></div>
<div class="a" style="left:918px;top:0;width:44px;height:12px;background:#fff;box-shadow:0 1px 2px #bbb"></div>
<div class="a" style="left:927px;top:-8px;width:11px;height:11px;border-radius:50%;background:#5cb85c"></div>
<div class="a" style="left:937px;top:-4px;width:12px;height:11px;border-radius:50%;background:#f0d080"></div>
<div class="a" style="left:950px;top:0;width:12px;height:4px;background:#e8a020"></div><div class="a" style="left:950px;top:4px;width:12px;height:3px;background:#c8c0e8"></div>
<div class="a" style="left:918px;top:21px;font-size:13px;color:#4a4a4a;white-space:nowrap">您的收藏</div>
<div class="a" style="left:912px;top:43px;width:50px;height:1px;background:#cfcfcf"></div>
<div class="a" style="left:912px;top:44px;width:50px;height:145px;background:#fff"></div>
<div class="a" style="left:912px;top:80px;width:50px;height:1px;background:#e6e6e6"></div>
<div class="a" style="left:912px;top:116px;width:50px;height:1px;background:#e6e6e6"></div>
<div class="a" style="left:912px;top:152px;width:50px;height:1px;background:#e6e6e6"></div>
<div class="a" style="left:912px;top:188px;width:50px;height:1px;background:#dcdcdc"></div>
<div class="a" style="left:912px;top:117px;width:2px;height:35px;background:#8cc870"></div>
<div class="a" style="left:950px;top:55px;font-size:14px;color:#333;white-space:nowrap">简</div>
<div class="a" style="left:935px;top:90px;font-size:14px;color:#333;white-space:nowrap">工具</div>
<div class="a" style="left:935px;top:126px;font-size:14px;color:#333;white-space:nowrap">方法</div>
<div class="a" style="left:937px;top:162px;font-size:14px;color:#333;white-space:nowrap">注意</div>
<div class="a" style="left:911px;top:644px;width:51px;height:1px;background:#a8a8a8"></div>
<div class="a" style="left:911px;top:668px;width:51px;height:1px;background:#555"></div>
<!--/PANEL-->
</body></html>
